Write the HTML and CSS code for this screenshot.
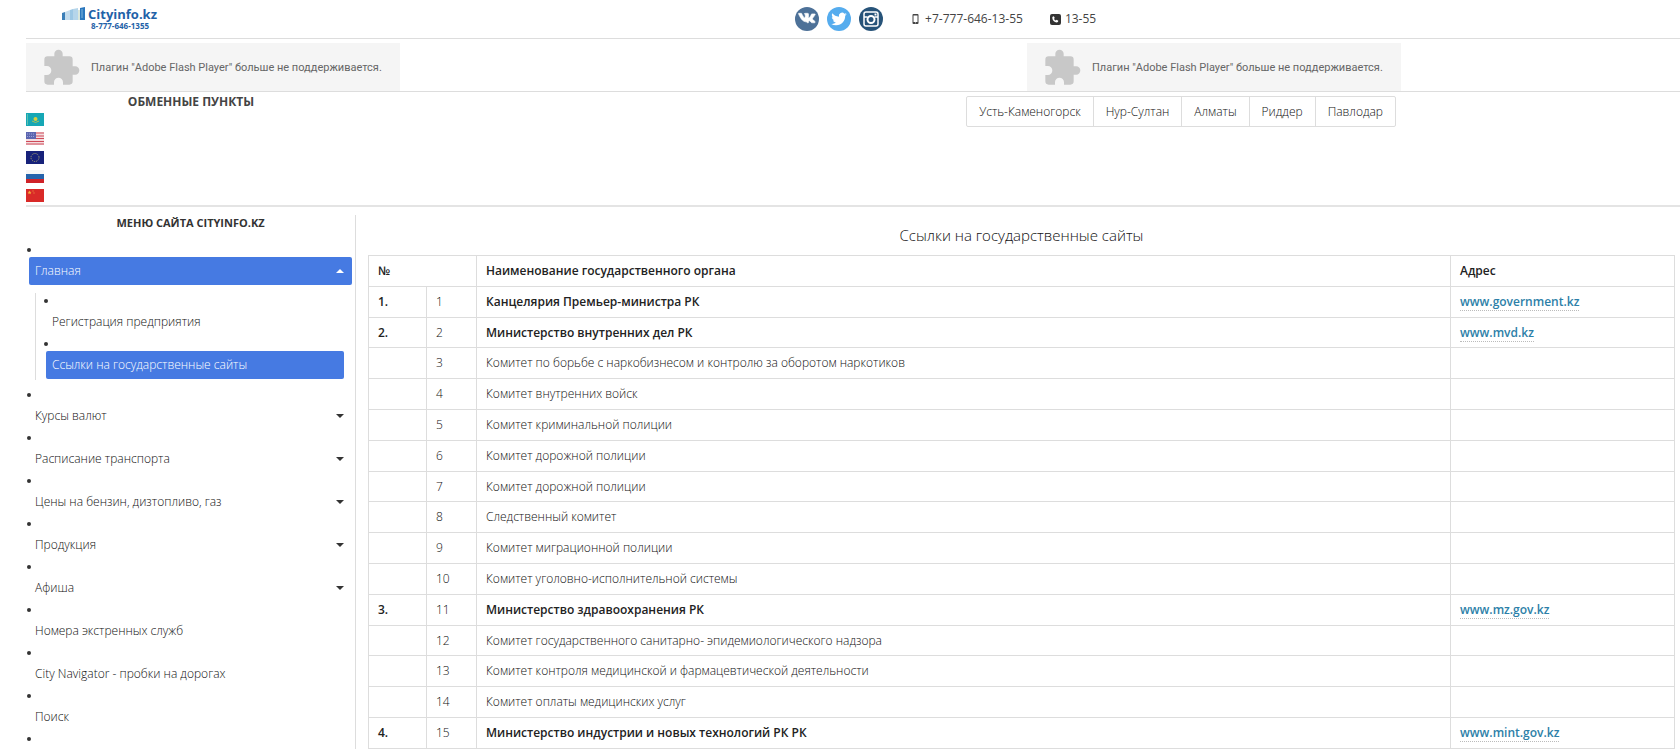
FILE: index.html
```html
<!DOCTYPE html>
<html lang="ru">
<head>
  <meta charset="UTF-8">
  <meta name="viewport" content="width=device-width, initial-scale=1.0">
  <title>Ссылки на государственные сайты - Cityinfo.kz</title>
  <link rel="stylesheet" href="styles.css">
</head>
<body>
  <header class="header">
    <a class="logo" href="#">
      <svg class="logo-pic" width="24" height="14" viewBox="0 0 24 14">
        <path d="M0 6l3-1v8H0z" fill="#3b7fb8"/>
        <path d="M3 5l5-2v10H3z" fill="#c3dced"/>
        <path d="M8 3l3-1v11H8z" fill="#9cc7e4"/>
        <path d="M11 2l5-1v12h-5z" fill="#b5d5ea"/>
        <path d="M16 3h2v10h-2z" fill="#d9e6dc"/>
        <path d="M18 1l5-1v13h-5z" fill="#2a76bd"/>
        <path d="M20 2v9" stroke="#7fb6de" fill="none"/>
      </svg>
      <span class="logo-text">
        <span class="logo-name">Cityinfo.kz</span>
        <span class="logo-phone">8-777-646-1355</span>
      </span>
    </a>
    <div class="contacts">
      <a class="social vk" href="#" aria-label="VK">
        <svg width="24" height="24" viewBox="0 0 24 24"><path fill="#fff" stroke="#fff" stroke-width=".6" d="M12.200 15.800h.9s.3 0 .4-.2c.1-.1.1-.4.1-.4s0-1.300.6-1.500c.6-.2 1.300 1.200 2.100 1.800.6.4 1 .3 1 .3h2.100s1.100-.1.6-1c0-.1-.3-.7-1.600-1.900-1.400-1.300-1.200-1 .5-3.300 1-1.300 1.400-2.200 1.300-2.500-.1-.3-.9-.2-.9-.2h-2.400s-.2 0-.3.1c-.1.1-.2.200-.2.200s-.4 1-.9 1.900c-1.100 1.800-1.500 1.900-1.700 1.800-.4-.3-.3-1.100-.3-1.700 0-1.800.3-2.600-.5-2.800-.3-.1-.5-.1-1.200-.1-.9 0-1.700 0-2.100.2-.3.1-.5.5-.4.5.2 0 .5.1.7.400.3.300.2 1.100.2 1.100s.2 2.100-.4 2.300c-.4.2-.9-.2-2-2.100-.6-.9-1-2-1-2s-.1-.2-.2-.3c-.2-.1-.4-.1-.4-.1H4s-.3 0-.5.100c-.1.100 0 .4 0 .4s1.800 4.200 3.800 6.300c1.800 1.900 3.900 1.800 4.900 1.800z"/></svg>
      </a>
      <a class="social tw" href="#" aria-label="Twitter">
        <svg width="24" height="24" viewBox="0 0 24 24"><path fill="#fff" transform="translate(4.200 4.200) scale(.65)" d="M24 4.600c-.9.400-1.800.7-2.800.8 1-.6 1.800-1.600 2.200-2.700-1 .6-2 1-3.100 1.200A4.920 4.920 0 0 0 11.900 8.400C7.700 8.100 4.100 6.100 1.700 3.100.4 5.300 1 8.200 3.200 9.700c-.8 0-1.600-.2-2.200-.6-.1 2.300 1.600 4.400 3.900 4.900-.7.200-1.500.2-2.200.1.600 2 2.400 3.400 4.600 3.400A9.900 9.900 0 0 1 0 19.500 13.900 13.900 0 0 0 7.500 21.700c9.100 0 14.300-7.700 14-14.600 1-.7 1.800-1.600 2.500-2.500z"/></svg>
      </a>
      <a class="social ig" href="#" aria-label="Instagram">
        <svg width="24" height="24" viewBox="0 0 24 24" fill="none" stroke="#fff"><rect x="5" y="5" width="14" height="14" rx="2" stroke-width="1.500"/><circle cx="12" cy="12.500" r="3.500" stroke-width="2"/><path d="M5 10h3.500M15.500 10H19" stroke-width="1.500"/><path d="M15.500 7.500h2" stroke-width="2"/></svg>
      </a>
      <span class="tel">
        <svg width="12" height="12" viewBox="0 0 12 12"><path fill="#444" fill-rule="evenodd" d="M4.500 1h4a1 1 0 0 1 1 1v8a1 1 0 0 1-1 1h-4a1 1 0 0 1-1-1V2a1 1 0 0 1 1-1zm0 1.500v6.500h4V2.500zM6 9.500v.8h1v-.8z"/></svg>
        +7-777-646-13-55
      </span>
      <span class="tel tel-short">
        <svg width="12" height="12" viewBox="0 0 12 12"><rect x="1" y="1" width="11" height="11" rx="2" fill="#333"/><path fill="#fff" d="M4.200 2.500l1 1.700-.8.700c.4.900 1 1.500 1.800 1.900l.8-.8 1.700 1c-.1 1-.7 1.600-1.500 1.600C4.700 8.500 2.700 6.300 2.700 4c0-.8.6-1.400 1.500-1.500z" transform="translate(.6 .8)"/></svg>
        13-55
      </span>
    </div>
  </header>

  <div class="banners">
    <div class="container">
      <div class="flash">
        <svg class="puzzle" width="40" height="40" viewBox="0 0 24 24"><path fill="#c8c8c8" d="M20.500 11H19V7a2 2 0 0 0-2-2h-4V3.500a2.500 2.500 0 0 0-5 0V5H4a2 2 0 0 0-2 2v3.800h1.500a2.700 2.700 0 0 1 0 5.400H2V20a2 2 0 0 0 2 2h3.800v-1.500a2.700 2.700 0 0 1 5.400 0V22H17a2 2 0 0 0 2-2v-4h1.500a2.500 2.500 0 0 0 0-5z"/></svg>
        <span>Плагин "Adobe Flash Player" больше не поддерживается.</span>
      </div>
      <div class="flash">
        <svg class="puzzle" width="40" height="40" viewBox="0 0 24 24"><path fill="#c8c8c8" d="M20.500 11H19V7a2 2 0 0 0-2-2h-4V3.500a2.500 2.500 0 0 0-5 0V5H4a2 2 0 0 0-2 2v3.800h1.500a2.700 2.700 0 0 1 0 5.400H2V20a2 2 0 0 0 2 2h3.800v-1.500a2.700 2.700 0 0 1 5.400 0V22H17a2 2 0 0 0 2-2v-4h1.500a2.500 2.500 0 0 0 0-5z"/></svg>
        <span>Плагин "Adobe Flash Player" больше не поддерживается.</span>
      </div>
    </div>
  </div>

  <div class="exchange">
    <div class="container">
      <div class="rates">
        <h2 class="rates-title">ОБМЕННЫЕ ПУНКТЫ</h2>
        <div class="flags">
          <svg width="18" height="13" viewBox="0 0 18 13"><rect width="18" height="13" fill="#16a7b5"/><circle cx="9.500" cy="6" r="2" fill="#d8cf3c"/><path d="M6 8q3.500 3 7 0" stroke="#a8c25a" fill="none"/><path d="M1.500 1v11" stroke="#5cc0b0"/></svg>
          <svg width="18" height="13" viewBox="0 0 18 13"><rect width="18" height="13" fill="#f3dcdf"/><path d="M0 1h18M0 4h18M0 6.500h18M0 9.500h18M0 12h18" stroke="#cf4a58"/><rect width="10" height="7" fill="#5c66b0"/><path d="M1 2h8M1 4.500h8" stroke="#9aa2d6" stroke-dasharray="1 1"/></svg>
          <svg width="18" height="13" viewBox="0 0 18 13"><rect width="18" height="13" fill="#17227a"/><circle cx="9" cy="6.500" r="4" fill="none" stroke="#b3ad72" stroke-dasharray="1 1.100"/></svg>
          <svg width="18" height="13" viewBox="0 0 18 13"><rect width="18" height="4" fill="#f6f6f6"/><rect y="4" width="18" height="5" fill="#2563ab"/><rect y="9" width="18" height="4" fill="#cf2228"/></svg>
          <svg width="18" height="13" viewBox="0 0 18 13"><rect width="18" height="13" fill="#d92a28"/><path d="M3.500 1.500l.6 1.300 1.400.1-1 .9.300 1.400-1.300-.7-1.200.7.300-1.400-1-.9 1.400-.1z" fill="#f3b13a"/><path d="M7 1.500v1M8 3.500v1" stroke="#f0a040"/></svg>
        </div>
      </div>
      <nav class="cities">
        <a href="#">Усть-Каменогорск</a>
        <a href="#">Нур-Султан</a>
        <a href="#">Алматы</a>
        <a href="#">Риддер</a>
        <a href="#">Павлодар</a>
      </nav>
    </div>
  </div>

  <div class="page">
    <aside class="sidebar">
      <h2 class="menu-title">МЕНЮ САЙТА CITYINFO.KZ</h2>
      <ul class="menu">
        <li>
          <a class="active up" href="#">Главная</a>
          <ul class="submenu">
            <li><a href="#">Регистрация предприятия</a></li>
            <li><a class="active" href="#">Ссылки на государственные сайты</a></li>
          </ul>
        </li>
        <li><a class="down" href="#">Курсы валют</a></li>
        <li><a class="down" href="#">Расписание транспорта</a></li>
        <li><a class="down" href="#">Цены на бензин, дизтопливо, газ</a></li>
        <li><a class="down" href="#">Продукция</a></li>
        <li><a class="down" href="#">Афиша</a></li>
        <li><a href="#">Номера экстренных служб</a></li>
        <li><a href="#">City Navigator - пробки на дорогах</a></li>
        <li><a href="#">Поиск</a></li>
        <li></li>
      </ul>
    </aside>

    <main class="content">
      <h1 class="title">Ссылки на государственные сайты</h1>
      <table class="links">
        <colgroup>
          <col class="col-group">
          <col class="col-num">
          <col>
          <col class="col-addr">
        </colgroup>
        <tr class="bold"><th colspan="2">№</th><th>Наименование государственного органа</th><th>Адрес</th></tr>
        <tr class="bold"><td>1.</td><td class="num">1</td><td>Канцелярия Премьер-министра РК</td><td><a href="#">www.government.kz</a></td></tr>
        <tr class="bold"><td>2.</td><td class="num">2</td><td>Министерство внутренних дел РК</td><td><a href="#">www.mvd.kz</a></td></tr>
        <tr><td></td><td>3</td><td>Комитет по борьбе с наркобизнесом и контролю за оборотом наркотиков</td><td></td></tr>
        <tr><td></td><td>4</td><td>Комитет внутренних войск</td><td></td></tr>
        <tr><td></td><td>5</td><td>Комитет криминальной полиции</td><td></td></tr>
        <tr><td></td><td>6</td><td>Комитет дорожной полиции</td><td></td></tr>
        <tr><td></td><td>7</td><td>Комитет дорожной полиции</td><td></td></tr>
        <tr><td></td><td>8</td><td>Следственный комитет</td><td></td></tr>
        <tr><td></td><td>9</td><td>Комитет миграционной полиции</td><td></td></tr>
        <tr><td></td><td>10</td><td>Комитет уголовно-исполнительной системы</td><td></td></tr>
        <tr class="bold"><td>3.</td><td class="num">11</td><td>Министерство здравоохранения РК</td><td><a href="#">www.mz.gov.kz</a></td></tr>
        <tr><td></td><td>12</td><td>Комитет государственного санитарно- эпидемиологического надзора</td><td></td></tr>
        <tr><td></td><td>13</td><td>Комитет контроля медицинской и фармацевтической деятельности</td><td></td></tr>
        <tr><td></td><td>14</td><td>Комитет оплаты медицинских услуг</td><td></td></tr>
        <tr class="bold"><td>4.</td><td class="num">15</td><td>Министерство индустрии и новых технологий РК РК</td><td><a href="#">www.mint.gov.kz</a></td></tr>
      </table>
    </main>
  </div>
</body>
</html>
```
FILE: styles.css
```css
* {
  box-sizing: border-box;
}
body {
  margin: 0;
  padding-left: 26px;
  font-family: "Open Sans", "Noto Sans", sans-serif;
  font-size: 12px;
  line-height: 1.15;
  color: #444;
  background: #fff;
}
a {
  color: inherit;
  text-decoration: none;
}
h1, h2 {
  margin: 0;
}
svg {
  display: block;
}

/* header */
.header {
  display: grid;
  grid-template-columns: 46.5% 1fr;
  height: 39px;
  border-bottom: 1px solid #ddd;
}
.logo {
  display: flex;
  gap: 2px;
  padding: 7px 0 0 36px;
  color: #1f62a8;
  font-weight: bold;
}
.logo-text {
  display: flex;
  flex-direction: column;
}
.logo-name {
  font-size: 13px;
  line-height: 14px;
}
.logo-phone {
  padding-left: 3px;
  font-size: 8px;
  line-height: 9px;
}
.contacts {
  display: flex;
  align-items: center;
  gap: 8px;
}
.social {
  border-radius: 50%;
}
.vk { background: #4d7198; }
.tw { background: #55acee; }
.ig { background: #275379; }
.tel {
  display: flex;
  align-items: center;
  gap: 4px;
  margin-left: 18px;
}

/* flash banners */
.container {
  display: flex;
  justify-content: space-between;
  max-width: 1375px;
}
.banners {
  padding-top: 4px;
  border-bottom: 1px solid #ddd;
}
.flash {
  display: flex;
  align-items: center;
  gap: 10px;
  width: 374px;
  height: 48px;
  padding: 2px 0 0 15px;
  background: #f5f5f5;
  color: #666;
  font-family: Roboto, sans-serif;
  font-size: 11px;
}

/* exchange rates and cities */
.exchange {
  height: 115px;
  border-bottom: 2px solid #e4e4e4;
}
.rates {
  width: 330px;
}
.rates-title {
  padding-top: 2px;
  text-align: center;
  font-size: 12px;
  line-height: 16px;
}
.flags {
  display: flex;
  flex-direction: column;
  gap: 6px;
  padding-top: 3px;
}
.cities {
  display: flex;
  align-self: flex-start;
  margin: 4px 5px 0 0;
  border: 1px solid #ddd;
  border-radius: 2px;
}
.cities a {
  padding: 0 12px;
  color: #111;
  font-weight: 300;
  line-height: 29px;
}
.cities a + a {
  border-left: 1px solid #ddd;
}

/* page */
.page {
  display: grid;
  grid-template-columns: 330px 1fr;
  padding-top: 8px;
}
.sidebar {
  border-right: 1px solid #ddd;
}
.menu-title {
  color: #333;
  text-align: center;
  font-size: 11px;
  line-height: 16px;
}
.menu {
  margin: 0;
  padding: 12px 3px 0;
  list-style: none;
}
.menu li::before {
  content: "";
  display: block;
  width: 4px;
  height: 4px;
  margin: 5px 0 5px -2px;
  border-radius: 50%;
  background: #333;
}
.menu li {
  display: flow-root;
}
.menu a {
  display: flex;
  align-items: center;
  justify-content: space-between;
  height: 28px;
  margin-bottom: 1px;
  padding: 0 6px;
  border-radius: 2px;
  color: #111;
  font-weight: 300;
}
.menu a.active {
  background: #467ae2;
  color: #fff;
}
.up::after,
.down::after {
  content: "";
  margin-right: 2px;
  border: 4px solid transparent;
}
.up::after {
  border-top: 0;
  border-bottom-color: #fff;
}
.down::after {
  border-bottom: 0;
  border-top-color: #333;
}
.submenu {
  margin: 8px 8px 8px 6px;
  padding: 1px 0 0 10px;
  border-left: 1px solid #ddd;
  list-style: none;
}

/* table */
.content {
  padding: 0 5px 0 12px;
}
.title {
  padding: 10px 0;
  color: #111;
  text-align: center;
  font-size: 15px;
  font-weight: 300;
  line-height: 20px;
}
.links {
  width: 100%;
  table-layout: fixed;
  border-collapse: collapse;
  color: #111;
  font-weight: 300;
}
.col-group { width: 58px; }
.col-num { width: 50px; }
.col-addr { width: 224px; }
.links th,
.links td {
  height: 30px;
  padding: 8px 9px;
  border: 1px solid #ddd;
  text-align: left;
}
.links .bold,
.links th {
  color: #222;
  font-weight: 600;
}
.links .num {
  color: #111;
  font-weight: 300;
}
.links a {
  border-bottom: 1px dotted #bbb;
  color: #2d7fa8;
}
```
